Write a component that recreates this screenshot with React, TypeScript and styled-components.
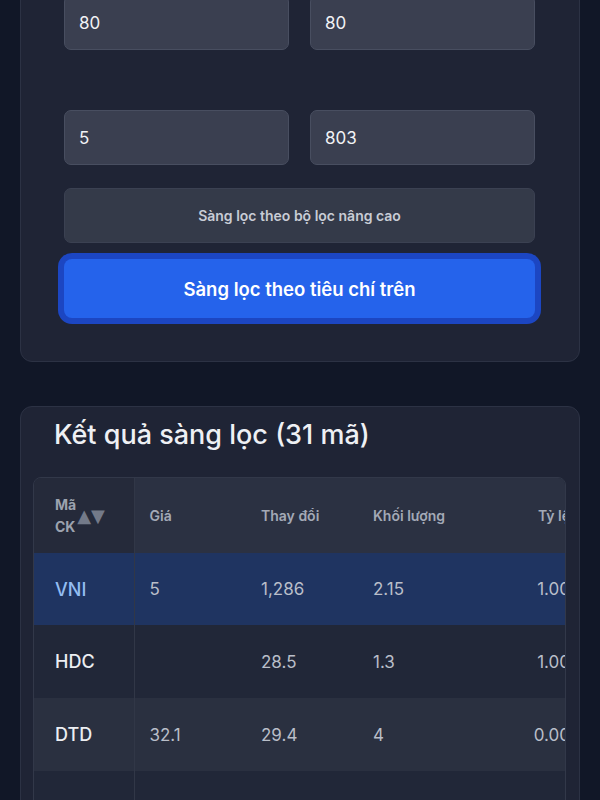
import React from 'react'
import styled, { createGlobalStyle, css } from 'styled-components'

type RowTone = 'active' | 'plain' | 'striped'

interface StockRow {
  code: string
  tone: RowTone
  values: string[]
}

const columns = ['Giá', 'Thay đổi', 'Khối lượng', 'Tỷ lệ']

const rows: StockRow[] = [
  { code: 'VNI', tone: 'active', values: ['5', '1,286', '2.15', '1.00'] },
  { code: 'HDC', tone: 'plain', values: ['', '28.5', '1.3', '1.00'] },
  { code: 'DTD', tone: 'striped', values: ['32.1', '29.4', '4', '0.00'] },
  { code: 'APS', tone: 'plain', values: ['6.8', '7.10', '2', '0.00'] },
  { code: 'VIX', tone: 'striped', values: ['12.4', '13.2', '3', '0.00'] },
]

const App: React.FC = () => {
  return (
    <>
      <GlobalStyle />
      <Page>
        <Card>
          <FieldGrid>
            <Input defaultValue="80" />
            <Input defaultValue="80" />
            <Input defaultValue="5" />
            <Input defaultValue="803" />
          </FieldGrid>
          <SecondaryButton>Sàng lọc theo bộ lọc nâng cao</SecondaryButton>
          <PrimaryButton>Sàng lọc theo tiêu chí trên</PrimaryButton>
        </Card>

        <ResultsCard>
          <Title>Kết quả sàng lọc (31 mã)</Title>
          <TableWrap>
            <Table>
              <colgroup>
                <col style={{ width: 100 }} />
                <col style={{ width: 112 }} />
                <col style={{ width: 112 }} />
                <col style={{ width: 112 }} />
                <col style={{ width: 100 }} />
              </colgroup>
              <thead>
                <tr>
                  <CodeHead>
                    <HeadInner>
                      <HeadLabel>Mã CK</HeadLabel>
                      <SortArrows>▲▼</SortArrows>
                    </HeadInner>
                  </CodeHead>
                  {columns.map((c, i) => (
                    <Head key={c} $last={i === columns.length - 1}>
                      {c}
                    </Head>
                  ))}
                </tr>
              </thead>
              <tbody>
                {rows.map((r) => (
                  <Row key={r.code} $tone={r.tone}>
                    <CodeCell $active={r.tone === 'active'}>{r.code}</CodeCell>
                    {r.values.map((v, i) => (
                      <Cell key={i} $last={i === r.values.length - 1}>
                        {v}
                      </Cell>
                    ))}
                  </Row>
                ))}
              </tbody>
            </Table>
          </TableWrap>
        </ResultsCard>
      </Page>
    </>
  )
}

export default App

const GlobalStyle = createGlobalStyle`
  * {
    box-sizing: border-box;
  }

  html,
  body {
    margin: 0;
    background: #111727;
  }

  body {
    font-family: Inter, 'Noto Sans', sans-serif;
    color: #e5e7eb;
    overflow: hidden;
  }
`

// the screenshot is scrolled a little, so the first card starts above the fold
const Page = styled.main`
  display: flex;
  flex-direction: column;
  gap: 44px;
  padding: 0 20px 40px;
  margin-top: -49px;
`

const Card = styled.section`
  display: flex;
  flex-direction: column;
  background: #1f2435;
  border: 1px solid #2c3244;
  border-radius: 12px;
  padding: 43px 44px 43px 43px;
`

const FieldGrid = styled.div`
  display: grid;
  grid-template-columns: 1fr 1fr;
  column-gap: 21px;
  row-gap: 60px;
`

const Input = styled.input`
  height: 55px;
  width: 100%;
  background: #3a3f50;
  border: 1px solid #484e60;
  border-radius: 7px;
  padding: 0 14px;
  font-family: inherit;
  font-size: 17px;
  color: #f1f2f5;
  outline: none;
`

const SecondaryButton = styled.button`
  margin-top: 23px;
  height: 55px;
  background: #343a49;
  border: 1px solid #3b4152;
  border-radius: 7px;
  font-family: inherit;
  font-size: 14px;
  font-weight: 600;
  color: #c8ccd5;
`

const PrimaryButton = styled.button`
  margin-top: 16px;
  height: 59px;
  background: #2563eb;
  border: none;
  border-radius: 8px;
  box-shadow: 0 0 0 6px #1c46c2;
  font-family: inherit;
  font-size: 18.5px;
  font-weight: 600;
  color: #ffffff;
`

const ResultsCard = styled.section`
  background: #1f2435;
  border: 1px solid #2c3244;
  border-radius: 12px;
  padding: 12px 13px 24px 12px;
`

const Title = styled.h2`
  margin: 0 0 26px 21px;
  font-size: 27px;
  line-height: 1.2;
  font-weight: 500;
  color: #eef0f4;
`

const TableWrap = styled.div`
  border: 1px solid #323849;
  border-radius: 8px;
  overflow: hidden;
  background: #222839;
`

const Table = styled.table`
  width: 536px;
  table-layout: fixed;
  border-collapse: collapse;
`

const Head = styled.th<{ $last?: boolean }>`
  height: 75px;
  padding: ${({ $last }) => ($last ? '0 0 0 15px' : '0 15px')};
  background: #2b3142;
  text-align: ${({ $last }) => ($last ? 'right' : 'left')};
  font-size: 14px;
  font-weight: 600;
  color: #a3a9b6;
  white-space: nowrap;
`

const CodeHead = styled(Head)`
  padding: 0 4px 0 21px;
  background: #252a3a;
  border-right: 1px solid #313747;
  text-align: left;
  font-weight: 700;
  color: #9ca3af;
`

const HeadInner = styled.div`
  display: flex;
  align-items: center;
`

const HeadLabel = styled.span`
  width: min-content;
  white-space: normal;
  line-height: 22px;
`

const SortArrows = styled.span`
  margin-left: 1px;
  font-family: 'DejaVu Sans', sans-serif;
  font-size: 18px;
  letter-spacing: 0;
  color: #737a89;
`

const toneStyles = {
  active: css`
    background: #1f3461;
  `,
  plain: css`
    background: #212738;
  `,
  striped: css`
    background: #2a3040;
  `,
}

const Row = styled.tr<{ $tone: RowTone }>`
  height: 73px;
  ${({ $tone }) => toneStyles[$tone]};

  &:first-child {
    height: 72px;
  }
`

const CodeCell = styled.td<{ $active: boolean }>`
  padding: 0 21px;
  border-right: 1px solid #313747;
  font-size: 18px;
  font-weight: 500;
  color: ${({ $active }) => ($active ? '#93bdf2' : '#eceef2')};
`

const Cell = styled.td<{ $last: boolean }>`
  padding: ${({ $last }) => ($last ? '0 0 0 15px' : '0 15px')};
  text-align: ${({ $last }) => ($last ? 'right' : 'left')};
  font-size: 17px;
  color: #b9bec9;
  white-space: nowrap;
`
